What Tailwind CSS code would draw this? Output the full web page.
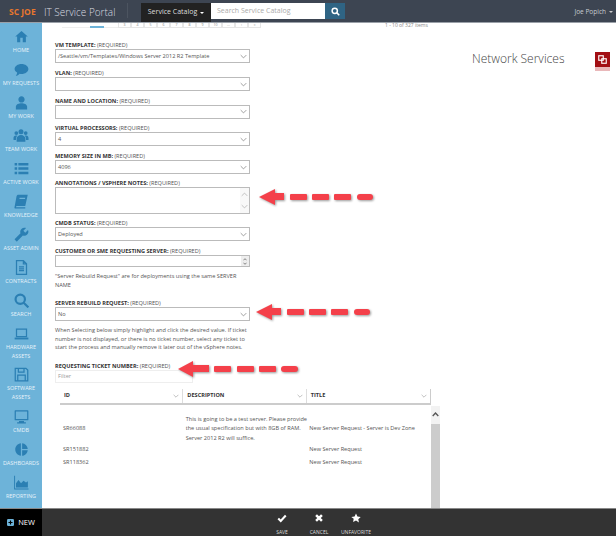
<!DOCTYPE html>
<html lang="en">

<head>
    <meta charset="UTF-8">
    <meta name="viewport" content="width=device-width, initial-scale=1.0">
    <script src="https://cdn.jsdelivr.net/npm/@tailwindcss/browser@4"></script>
    <title>IT Service Portal</title>
</head>

<body class="w-[616px] h-[536px] overflow-hidden bg-white flex flex-col font-['Open_Sans',sans-serif] text-[#444]">
    <!-- top bar -->
    <header class="h-[23px] shrink-0 bg-[#3d4552] border-b border-[#9aa0a8] flex items-start">
        <div class="w-[44px] pl-[9px] pt-[6px] text-[8.5px] leading-[12px] font-bold text-[#e8772e] whitespace-nowrap">SC JOE</div>
        <div class="w-[83px] pt-[5px] text-[10px] leading-[14px] font-light text-[#d8dce0] whitespace-nowrap">IT Service Portal</div>
        <div class="w-px h-[15px] mt-[3px] mr-[13px] bg-[#4c5460]"></div>
        <div class="w-[70px] h-[19px] mt-[3px] bg-[#222] text-[#ddd] text-[7px] flex items-center justify-center gap-[3px]">
            Service Catalog
            <span class="w-0 h-0 border-x-[2px] border-x-transparent border-t-[2px] border-t-white"></span>
        </div>
        <div class="w-[114px] h-[16px] mt-[3px] bg-white text-[#aaa] text-[7px] leading-[16px] pl-[6px]">Search Service Catalog</div>
        <div class="w-[20px] h-[16px] mt-[3px] bg-[#2f6484] flex items-center justify-center">
            <svg class="w-[9px] h-[9px]" viewBox="0 0 24 24" fill="none" stroke="#fff" stroke-width="4"><circle cx="10" cy="10" r="7"></circle><path d="M15 15l7 7"></path></svg>
        </div>
        <div class="ml-auto pr-[3px] pt-[7px] text-[6.5px] leading-[10px] text-[#c8ccd0] flex items-center gap-[3px]">
            Joe Popich
            <span class="w-0 h-0 border-x-[2px] border-x-transparent border-t-[2px] border-t-[#ccc]"></span>
        </div>
    </header>

    <div class="flex-1 flex min-h-0">
        <!-- left nav -->
        <nav class="w-[42px] shrink-0 bg-[#6db3d9] text-[#e6f2f9] text-[5.5px] leading-[9px] text-center flex flex-col pt-[6px] overflow-hidden">
            <a class="h-[33.65px] flex flex-col items-center whitespace-nowrap">
                <svg class="w-[15px] h-[15px] mb-[2px]" viewBox="0 0 24 24" fill="#2b7fb3"><path d="M10 21v-7h4v7h5v-9h3L12 3 2 12h3v9z"></path></svg>HOME
            </a>
            <a class="h-[33.65px] flex flex-col items-center whitespace-nowrap">
                <svg class="w-[15px] h-[15px] mb-[2px]" viewBox="0 0 24 24" fill="#2b7fb3"><path d="M12 3c6 0 11 3.400 11 8s-5 8-11 8c-1 0-2-.1-3-.3C7.500 20.500 5 22 3 22c1-1.200 2-3 2-5.200C2.500 15.300 1 13.300 1 11c0-4.600 5-8 11-8z"></path></svg>MY REQUESTS
            </a>
            <a class="h-[33.65px] flex flex-col items-center whitespace-nowrap">
                <svg class="w-[15px] h-[15px] mb-[2px]" viewBox="0 0 24 24" fill="#2b7fb3"><path d="M12 12c2.800 0 5-2.200 5-5s-2.200-5-5-5-5 2.200-5 5 2.200 5 5 5zm0 1c-4 0-9 1.800-9 5.500V23h18v-4.500c0-3.700-5-5.500-9-5.500z"></path></svg>MY WORK
            </a>
            <a class="h-[33.65px] flex flex-col items-center whitespace-nowrap">
                <svg class="w-[16px] h-[15px] mb-[2px]" viewBox="0 0 24 24" fill="#2b7fb3"><circle cx="12" cy="6" r="4"></circle><circle cx="4.500" cy="8" r="3"></circle><circle cx="19.500" cy="8" r="3"></circle><path d="M5 22v-5c0-3 3-6 7-6s7 3 7 6v5zM0 19v-3c0-2 1.500-4 4-4 .8 0 1.500.2 2 .5-1.300 1.200-2 2.800-2 4.500v2zM24 19v-3c0-2-1.500-4-4-4-.8 0-1.500.2-2 .5 1.300 1.200 2 2.800 2 4.500v2z"></path></svg>TEAM WORK
            </a>
            <a class="h-[33.65px] flex flex-col items-center whitespace-nowrap">
                <svg class="w-[15px] h-[15px] mb-[2px]" viewBox="0 0 24 24" fill="#2b7fb3"><path d="M1 3h4v4H1zM7 3h16v4H7zM1 10h4v4H1zM7 10h16v4H7zM1 17h4v4H1zM7 17h16v4H7z"></path></svg>ACTIVE WORK
            </a>
            <a class="h-[33.65px] flex flex-col items-center whitespace-nowrap">
                <svg class="w-[15px] h-[15px] mb-[2px]" viewBox="0 0 24 24" fill="#2b7fb3"><path d="M7 1h15l-4 18H4L3 21h15v2H2c-1 0-1.500-1-1.200-2L4 4c.3-2 1.500-3 3-3zm2 5l-.4 2h9l.4-2z"></path></svg>KNOWLEDGE
            </a>
            <a class="h-[33.65px] flex flex-col items-center whitespace-nowrap">
                <svg class="w-[15px] h-[15px] mb-[2px] -scale-x-100" viewBox="0 0 24 24" fill="#2b7fb3"><path d="M22.700 19l-9.100-9.100c.9-2.300.4-5-1.500-6.900-2-2-5-2.400-7.400-1.300L9 6 6 9 1.600 4.700C.4 7.100.9 10.100 2.900 12.100c1.900 1.900 4.600 2.400 6.900 1.500l9.100 9.100c.4.4 1 .4 1.400 0l2.300-2.300c.5-.4.5-1.100.1-1.400z"></path></svg>ASSET ADMIN
            </a>
            <a class="h-[33.65px] flex flex-col items-center whitespace-nowrap">
                <svg class="w-[15px] h-[15px] mb-[2px]" viewBox="0 0 24 24" fill="none" stroke="#2b7fb3" stroke-width="2"><path d="M4 1h11l5 5v17H4zM15 1v5h5"></path><path d="M8 11h8M8 14h8M8 17h8" stroke-width="2"></path></svg>CONTRACTS
            </a>
            <a class="h-[33.65px] flex flex-col items-center whitespace-nowrap">
                <svg class="w-[15px] h-[15px] mb-[2px]" viewBox="0 0 24 24" fill="none" stroke="#2b7fb3" stroke-width="3.500"><circle cx="10" cy="10" r="7.500"></circle><path d="M15.500 15.500L23 23"></path></svg>SEARCH
            </a>
            <a class="h-[42.5px] flex flex-col items-center">
                <svg class="w-[15px] h-[15px] mb-[2px]" viewBox="0 0 24 24" fill="none" stroke="#2b7fb3" stroke-width="2"><rect x="4" y="5" width="16" height="12"></rect><path d="M1 20h22" stroke-width="3"></path></svg>HARDWARE ASSETS
            </a>
            <a class="h-[42.5px] flex flex-col items-center">
                <svg class="w-[15px] h-[15px] mb-[2px]" viewBox="0 0 24 24" fill="none" stroke="#2b7fb3" stroke-width="2"><path d="M2 2h17l3 3v17H2z"></path><path d="M7 2v6h9V2M6 22v-9h12v9"></path></svg>SOFTWARE ASSETS
            </a>
            <a class="h-[33.65px] flex flex-col items-center whitespace-nowrap">
                <svg class="w-[15px] h-[15px] mb-[2px]" viewBox="0 0 24 24" fill="#2b7fb3"><path fill-rule="evenodd" d="M2 2h20c.6 0 1 .4 1 1v14c0 .6-.4 1-1 1H2c-.6 0-1-.4-1-1V3c0-.6.4-1 1-1zm1 2v12h18V4zM8 19h8v2h3v2H5v-2h3z"></path></svg>CMDB
            </a>
            <a class="h-[33.65px] flex flex-col items-center whitespace-nowrap">
                <svg class="w-[15px] h-[15px] mb-[2px]" viewBox="0 0 24 24" fill="#2b7fb3"><path d="M11 2v20C5.900 21.500 2 17.200 2 12S5.900 2.500 11 2zm2 0v9h9c-.5-4.700-4.300-8.500-9-9zm0 11v9c4.700-.5 8.500-4.300 9-9z"></path></svg>DASHBOARDS
            </a>
            <a class="h-[33.65px] flex flex-col items-center whitespace-nowrap">
                <svg class="w-[16px] h-[15px] mb-[2px]" viewBox="0 0 24 24" fill="#2b7fb3"><path d="M1 1h1.500v20.500H24V23H1zM4 20v-7l4-5 4 5 4-4 4 3 3-2v10z"></path></svg>REPORTING
            </a>
        </nav>

        <!-- page body -->
        <main class="flex-1 relative overflow-hidden">
            <!-- pagination leftovers scrolled under the header -->
            <div class="flex h-[5px] pl-[20px] text-[3.5px] leading-[4px] text-[#888]">
                <span class="w-[14px] h-[5px] border-b border-[#eee]"></span>
                <span class="w-[14px] h-[5px] border-b border-[#eee]"></span>
                <span class="w-[14px] h-[5px] border-b-2 border-[#6db3d9]"></span>
                <span class="w-[14px] h-[5px] border-b border-[#eee]"></span>
                <span class="w-[13px] h-[5px] border border-t-0 border-[#e6e6e6] text-center">3</span>
                <span class="w-[13px] h-[5px] border border-t-0 border-[#e6e6e6] text-center">4</span>
                <span class="w-[13px] h-[5px] border border-t-0 border-[#e6e6e6] text-center">5</span>
                <span class="w-[13px] h-[5px] border border-t-0 border-[#e6e6e6] text-center">6</span>
                <span class="w-[13px] h-[5px] border border-t-0 border-[#e6e6e6] text-center">7</span>
                <span class="w-[13px] h-[5px] border border-t-0 border-[#e6e6e6] text-center">8</span>
                <span class="w-[13px] h-[5px] border border-t-0 border-[#e6e6e6] text-center">9</span>
                <span class="w-[13px] h-[5px] border border-t-0 border-[#e6e6e6] text-center">10</span>
                <span class="w-[13px] h-[5px] border border-t-0 border-[#e6e6e6] text-center">...</span>
                <span class="w-[13px] h-[5px] border border-t-0 border-[#e6e6e6] text-center">›</span>
                <span class="w-[13px] h-[5px] border border-t-0 border-[#e6e6e6] text-center">»</span>
                <span class="ml-[124px] whitespace-nowrap text-[5px] leading-[5px]">1 - 10 of 327 items</span>
            </div>

            <div class="flex items-start">
                <!-- form column -->
                <form class="w-[208px] shrink-0 ml-[13px] pt-[13px] text-[5.6px] leading-[8px] text-[#555]">
                    <div class="h-[8px] whitespace-nowrap"><b class="text-[#333]">VM TEMPLATE:</b> (REQUIRED)</div>
                    <div class="w-[195px] h-[14px] mb-[6px] border border-[#bbb] pl-[2px] flex items-center justify-between pr-[2px]">/Seattle/vm/Templates/Windows Server 2012 R2 Template
                        <svg class="w-[7px] h-[5px]" viewBox="0 0 10 6" fill="none" stroke="#777"><path d="M1 1l4 4 4-4"></path></svg>
                    </div>
                    <div class="h-[8px] whitespace-nowrap"><b class="text-[#333]">VLAN:</b> (REQUIRED)</div>
                    <div class="w-[195px] h-[14px] mb-[5.500px] border border-[#bbb] flex items-center justify-end pr-[2px]">
                        <svg class="w-[7px] h-[5px]" viewBox="0 0 10 6" fill="none" stroke="#777"><path d="M1 1l4 4 4-4"></path></svg>
                    </div>
                    <div class="h-[8px] whitespace-nowrap"><b class="text-[#333]">NAME AND LOCATION:</b> (REQUIRED)</div>
                    <div class="w-[195px] h-[14px] mb-[5.500px] border border-[#bbb] flex items-center justify-end pr-[2px]">
                        <svg class="w-[7px] h-[5px]" viewBox="0 0 10 6" fill="none" stroke="#777"><path d="M1 1l4 4 4-4"></path></svg>
                    </div>
                    <div class="h-[8px] whitespace-nowrap"><b class="text-[#333]">VIRTUAL PROCESSORS:</b> (REQUIRED)</div>
                    <div class="w-[195px] h-[14px] mb-[6px] border border-[#bbb] pl-[2px] flex items-center justify-between pr-[2px]">4
                        <svg class="w-[7px] h-[5px]" viewBox="0 0 10 6" fill="none" stroke="#777"><path d="M1 1l4 4 4-4"></path></svg>
                    </div>
                    <div class="h-[8px] whitespace-nowrap"><b class="text-[#333]">MEMORY SIZE IN MB:</b> (REQUIRED)</div>
                    <div class="w-[195px] h-[14px] mb-[5px] border border-[#bbb] pl-[2px] flex items-center justify-between pr-[2px]">4096
                        <svg class="w-[7px] h-[5px]" viewBox="0 0 10 6" fill="none" stroke="#777"><path d="M1 1l4 4 4-4"></path></svg>
                    </div>
                    <div class="h-[8px] whitespace-nowrap"><b class="text-[#333]">ANNOTATIONS / VSPHERE NOTES:</b> (REQUIRED)</div>
                    <div class="w-[195px] h-[27px] mb-[5px] border border-[#bbb] flex justify-end">
                        <div class="w-[9px] bg-[#f8f8f8] flex flex-col items-center justify-center gap-[7px]">
                            <svg class="w-[7px] h-[5px]" viewBox="0 0 10 6" fill="none" stroke="#aaa"><path d="M1 5l4-4 4 4"></path></svg>
                            <svg class="w-[7px] h-[5px]" viewBox="0 0 10 6" fill="none" stroke="#aaa"><path d="M1 1l4 4 4-4"></path></svg>
                        </div>
                    </div>
                    <div class="h-[8px] whitespace-nowrap"><b class="text-[#333]">CMDB STATUS:</b> (REQUIRED)</div>
                    <div class="w-[195px] h-[14px] mb-[6px] border border-[#bbb] pl-[2px] flex items-center justify-between pr-[2px]">Deployed
                        <svg class="w-[7px] h-[5px]" viewBox="0 0 10 6" fill="none" stroke="#777"><path d="M1 1l4 4 4-4"></path></svg>
                    </div>
                    <div class="h-[8px] whitespace-nowrap"><b class="text-[#333]">CUSTOMER OR SME REQUESTING SERVER:</b> (REQUIRED)</div>
                    <div class="w-[195px] h-[12px] mb-[5px] border border-[#bbb] flex justify-end">
                        <div class="w-[8px] bg-[#eee] flex flex-col items-center justify-center gap-[1px]">
                            <svg class="w-[4px] h-[3px]" viewBox="0 0 10 6" fill="none" stroke="#666" stroke-width="2"><path d="M1 5l4-4 4 4"></path></svg>
                            <svg class="w-[4px] h-[3px]" viewBox="0 0 10 6" fill="none" stroke="#666" stroke-width="2"><path d="M1 1l4 4 4-4"></path></svg>
                        </div>
                    </div>
                    <p class="w-[188px] leading-[8.500px] mb-[10px]">"Server Rebuild Request" are for deployments using the same SERVER NAME</p>
                    <div class="h-[8px] whitespace-nowrap"><b class="text-[#333]">SERVER REBUILD REQUEST:</b> (REQUIRED)</div>
                    <div class="w-[195px] h-[14px] mb-[5px] border border-[#bbb] pl-[2px] flex items-center justify-between pr-[2px]">No
                        <svg class="w-[7px] h-[5px]" viewBox="0 0 10 6" fill="none" stroke="#777"><path d="M1 1l4 4 4-4"></path></svg>
                    </div>
                    <p class="w-[195px] leading-[8.500px] mb-[10px]">When Selecting below simply highlight and click the desired value. If ticket number is not displayed, or there is no ticket number, select any ticket to start the process and manually remove it later out of the vSphere notes.</p>
                    <div class="h-[8px] whitespace-nowrap"><b class="text-[#333]">REQUESTING TICKET NUMBER:</b> (REQUIRED)</div>
                    <div class="w-[138px] h-[13px] border border-[#eee] pl-[2px] flex items-center text-[#999]">Filter</div>
                </form>

                <!-- title -->
                <div class="flex-1 flex items-start justify-between pt-[22px] pl-[209px]">
                    <h1 class="text-[12px] leading-[18px] font-light text-[#444] whitespace-nowrap">Network Services</h1>
                    <div class="mr-[6px] mt-[2px]">
                        <div class="w-[15px] h-[15px] bg-[#a20f14] flex items-center justify-center">
                            <svg class="w-[9px] h-[9px]" viewBox="0 0 12 12" fill="none" stroke="#fff" stroke-width="1.500"><rect x="1" y="1" width="6" height="6"></rect><rect x="5" y="5" width="6" height="6"></rect></svg>
                        </div>
                        <div class="w-[15px] h-[4px] bg-[#e9b8ba]"></div>
                    </div>
                </div>
            </div>

            <!-- ticket table -->
            <div class="w-[380px] ml-[18px] mt-[6px] flex items-start text-[5.6px] leading-[9px] text-[#555]">
                <div class="w-[371px]">
                    <div class="grid grid-cols-3 h-[16px] border-b-2 border-[#ccc] border-r border-r-[#ccc] font-bold text-[#333]">
                        <div class="flex items-center justify-between pl-[4px] pr-[3px] border-r border-[#ddd]">ID
                            <svg class="w-[6px] h-[4px]" viewBox="0 0 10 6" fill="none" stroke="#999"><path d="M1 1l4 4 4-4"></path></svg>
                        </div>
                        <div class="flex items-center justify-between pl-[4px] pr-[3px] border-r border-[#ddd]">DESCRIPTION
                            <svg class="w-[6px] h-[4px]" viewBox="0 0 10 6" fill="none" stroke="#999"><path d="M1 1l4 4 4-4"></path></svg>
                        </div>
                        <div class="flex items-center justify-between pl-[4px] pr-[3px]">TITLE
                            <svg class="w-[6px] h-[4px]" viewBox="0 0 10 6" fill="none" stroke="#999"><path d="M1 1l4 4 4-4"></path></svg>
                        </div>
                    </div>
                    <div class="grid grid-cols-3 items-center pt-[10px] leading-[9.500px]">
                        <div class="pl-[3px]">SR66088</div>
                        <div class="pl-[2px] whitespace-nowrap">This is going to be a test server. Please provide<br>the usual specification but with 8GB of RAM.<br>Server 2012 R2 will suffice.</div>
                        <div class="pl-[2px] whitespace-nowrap">New Server Request - Server is Dev Zone</div>
                    </div>
                    <div class="grid grid-cols-3 h-[13px] items-center">
                        <div class="pl-[3px]">SR151882</div><div></div><div class="pl-[2px]">New Server Request</div>
                    </div>
                    <div class="grid grid-cols-3 h-[13px] items-center">
                        <div class="pl-[3px]">SR118362</div><div></div><div class="pl-[2px]">New Server Request</div>
                    </div>
                </div>
                <div class="w-[9px] h-[103px] mt-[17px] bg-[#ccc] shrink-0">
                    <div class="h-[18px] bg-[#f2f2f2] flex items-center justify-center">
                        <svg class="w-[7px] h-[5px]" viewBox="0 0 10 6" fill="none" stroke="#555" stroke-width="2"><path d="M1 5l4-4 4 4"></path></svg>
                    </div>
                </div>
            </div>

            <!-- red annotation arrows drawn over the form -->
            <svg class="absolute left-[217px] top-[164px] w-[116px] h-[20px] drop-shadow-[1px_1px_1px_rgba(0,0,0,0.4)]" viewBox="0 0 116 20" fill="#f4404a"><path d="M0 10L16 2v4h9v7h-9v5z"></path><rect x="31" y="7" width="17" height="6" rx="1"></rect><rect x="53" y="7" width="17" height="6" rx="1"></rect><rect x="75" y="7" width="17" height="6" rx="1"></rect><rect x="98" y="7" width="16" height="6" rx="3"></rect></svg>
            <svg class="absolute left-[214px] top-[279px] w-[116px] h-[20px] drop-shadow-[1px_1px_1px_rgba(0,0,0,0.4)]" viewBox="0 0 116 20" fill="#f4404a"><path d="M0 10L16 2v4h9v7h-9v5z"></path><rect x="31" y="7" width="17" height="6" rx="1"></rect><rect x="53" y="7" width="17" height="6" rx="1"></rect><rect x="75" y="7" width="17" height="6" rx="1"></rect><rect x="98" y="7" width="16" height="6" rx="3"></rect></svg>
            <svg class="absolute left-[136px] top-[336px] w-[124px] h-[20px] drop-shadow-[1px_1px_1px_rgba(0,0,0,0.4)]" viewBox="0 0 124 20" fill="#f4404a"><path d="M0 10L15 2v4h16v7H15v5z"></path><rect x="36" y="7" width="17" height="6" rx="1"></rect><rect x="59" y="7" width="17" height="6" rx="1"></rect><rect x="81" y="7" width="17" height="6" rx="1"></rect><rect x="103" y="7" width="17" height="6" rx="3"></rect></svg>
        </main>
    </div>

    <!-- bottom action bar -->
    <footer class="h-[28px] shrink-0 bg-[#333] border-t border-[#888] flex text-white">
        <div class="w-[42px] bg-black flex items-center justify-center gap-[4px] text-[7.500px]">
            <svg class="w-[7px] h-[7px]" viewBox="0 0 12 12"><rect width="12" height="12" rx="2" fill="#6db3d9"></rect><path d="M6 2.500v7M2.500 6h7" stroke="#000" stroke-width="2"></path></svg>
            NEW
        </div>
        <div class="flex text-[5px] leading-[7px] text-[#ddd] pt-[4px]">
            <div class="w-[40px] ml-[220px] flex flex-col items-center gap-[6px]">
                <svg class="w-[10px] h-[10px]" viewBox="0 0 24 24" fill="none" stroke="#fff" stroke-width="5"><path d="M3 13l6 6L21 6"></path></svg>SAVE
            </div>
            <div class="w-[34px] flex flex-col items-center gap-[6px]">
                <svg class="w-[10px] h-[10px]" viewBox="0 0 24 24" fill="none" stroke="#fff" stroke-width="6"><path d="M5 5l14 14M19 5L5 19"></path></svg>CANCEL
            </div>
            <div class="w-[40px] flex flex-col items-center gap-[6px]">
                <svg class="w-[10px] h-[10px]" viewBox="0 0 24 24" fill="#fff"><path d="M12 1l3.400 7.300 7.900 1-5.800 5.500 1.500 7.900L12 18l-7 3.700 1.500-7.900L.7 9.300l7.900-1z"></path></svg>UNFAVORITE
            </div>
        </div>
    </footer>
</body>

</html>
